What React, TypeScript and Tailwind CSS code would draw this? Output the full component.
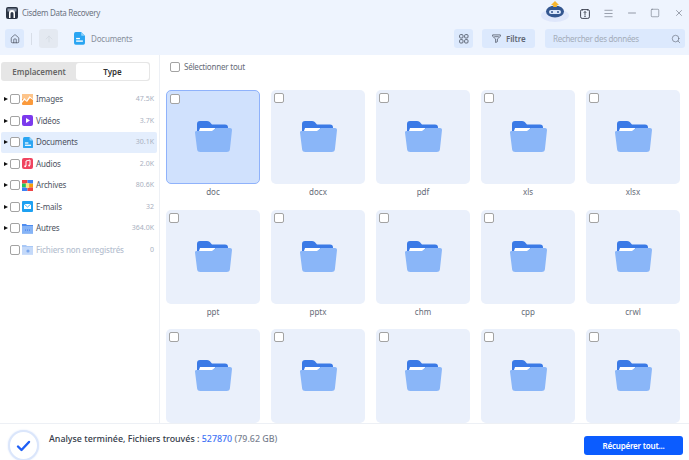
import React from "react";
import { Search, ArrowUp, Minus, Square, X, Menu, House } from "lucide-react";

const Check = ({ className = "" }: { className?: string }) => (
  <span className={"block w-[10px] h-[10px] rounded-[2px] border border-[#a3a3a3] bg-white shrink-0 " + className} />
);

const DocIcon = ({ size = 13 }: { size?: number }) => (
  <svg width={size} height={size * 1.15} viewBox="0 0 13 15" className="shrink-0">
    <path d="M2 0h6.5L13 4.5V13a2 2 0 0 1-2 2H2a2 2 0 0 1-2-2V2a2 2 0 0 1 2-2z" fill="#2aa5f2" />
    <path d="M8.5 0L13 4.5H9.5a1 1 0 0 1-1-1z" fill="#8fd2fa" />
    <rect x="2.5" y="7" width="4.5" height="1.6" fill="#fff" />
    <rect x="2.5" y="10" width="8" height="1.6" fill="#fff" />
  </svg>
);

const icons: Record<string, React.ReactNode> = {
  Images: (
    <svg width="11" height="11" viewBox="0 0 11 11">
      <rect width="11" height="11" rx="1" fill="#fb9a3c" />
      <path d="M5 6l2.500-4 3.500 3V0H0v5z" fill="#fdc48a" />
      <path d="M0 7l2.500-3 2 2.500L7.500 2 11 5v1L8 4 5 8 2.500 6 0 9z" fill="#fff" />
    </svg>
  ),
  Vidéos: (
    <svg width="11" height="11" viewBox="0 0 11 11">
      <rect width="11" height="11" rx="2" fill="#7c3aed" />
      <path d="M4 3l4 2.500L4 8z" fill="#fff" />
    </svg>
  ),
  Documents: <DocIcon size={10} />,
  Audios: (
    <svg width="11" height="11" viewBox="0 0 11 11">
      <rect width="11" height="11" rx="2" fill="#f0435f" />
      <path d="M4 8V3l4-1v5" stroke="#fff" fill="none" />
      <circle cx="3.200" cy="8.200" r="1" fill="#fff" />
      <circle cx="7.200" cy="7.400" r="1" fill="#fff" />
    </svg>
  ),
  Archives: (
    <svg width="11" height="11" viewBox="0 0 11 11">
      <rect width="5.500" height="3.600" fill="#ef4444" />
      <rect x="5.500" width="5.500" height="3.600" fill="#3b82f6" />
      <rect y="3.600" width="5.500" height="3.800" fill="#22c55e" />
      <rect x="5.500" y="3.600" width="5.500" height="3.800" fill="#f59e0b" />
      <rect y="7.400" width="5.500" height="3.600" fill="#3b82f6" />
      <rect x="5.500" y="7.400" width="5.500" height="3.600" fill="#ef4444" />
      <rect x="3.800" y="3" width="3.400" height="5" rx=".5" fill="#fde68a" />
    </svg>
  ),
  "E-mails": (
    <svg width="11" height="11" viewBox="0 0 11 11">
      <rect width="11" height="11" rx="1" fill="#1ea1f2" />
      <rect x="2" y="3" width="7" height="5" fill="#fff" />
      <path d="M2 3l3.500 3L9 3" stroke="#1ea1f2" strokeWidth=".8" fill="none" />
    </svg>
  ),
  Autres: (
    <svg width="11" height="11" viewBox="0 0 11 11">
      <path d="M0 1h4l1 1h6v8.500H0z" fill="#4f8df0" />
      <rect y="3" width="11" height="7.500" fill="#86b4f6" />
      <circle cx="3.500" cy="7" r=".5" fill="#2563eb" />
      <circle cx="5.500" cy="7" r=".5" fill="#2563eb" />
      <circle cx="7.500" cy="7" r=".5" fill="#2563eb" />
    </svg>
  ),
  "Fichiers non enregistrés": (
    <svg width="11" height="11" viewBox="0 0 11 11">
      <path d="M0 1h4l1 1h6v8.500H0z" fill="#a9c8f6" />
      <rect y="3" width="11" height="7.500" fill="#c4d9f9" />
      <circle cx="6" cy="7" r="1.600" fill="#7ba8ee" />
    </svg>
  ),
};

const rows = [
  ["Images", "47.5K"],
  ["Vidéos", "3.7K"],
  ["Documents", "30.1K"],
  ["Audios", "2.0K"],
  ["Archives", "80.6K"],
  ["E-mails", "32"],
  ["Autres", "364.0K"],
  ["Fichiers non enregistrés", "0"],
];

const Folder = () => (
  <svg width="37" height="31" viewBox="0 0 37 31" className="mt-[-1px]">
    <path d="M2 3a3 3 0 0 1 3-3h7c2 0 3 1 4 2.500l1 1h13a3 3 0 0 1 3 3v8H2z" fill="#3b7ae6" />
    <path d="M5 7h15.500l-2 3H4z" fill="#fff" />
    <path d="M1.500 10h14.500c1.500 0 2-.6 3-1.500.8-.8 1.500-1.500 3-1.500H35c1.300 0 2 .8 2 2L35 27.500a3.500 3.500 0 0 1-3.500 3.500H5.500A3.500 3.500 0 0 1 2 27.500L0 11.500c0-1 .5-1.500 1.500-1.500z" fill="#8ab6f8" />
  </svg>
);

const names = ["doc", "docx", "pdf", "xls", "xlsx", "ppt", "pptx", "chm", "cpp", "crwl", "", "", "", "", ""];

export default function App() {
  return (
    <div className="w-[689px] h-[460px] overflow-hidden bg-white flex flex-col font-['Noto_Sans','Liberation_Sans',sans-serif] text-[#555]">
      <header className="h-[55px] shrink-0 bg-[#eef4fe] flex flex-col">
        <div className="h-[26px] flex items-center pl-[6px] pr-[5px]">
          <svg width="12" height="12" viewBox="0 0 12 12" className="shrink-0">
            <rect width="12" height="12" rx="2" fill="#2b3444" />
            <rect x="1.500" y="1.500" width="9" height="3" fill="#8a94a6" />
            <path d="M3 11V6a3 3 0 0 1 6 0v5H7.500V6.500a1.500 1.500 0 0 0-3 0V11z" fill="#fff" />
          </svg>
          <span className="ml-[4px] text-[8px] tracking-[-0.28px] text-[#6b7280]">Cisdem Data Recovery</span>
          <div className="ml-auto flex items-center">
            <svg width="28" height="21" viewBox="0 0 28 21" className="mr-[11px] mt-[-3px]">
              <ellipse cx="14" cy="14.500" rx="14" ry="6.500" fill="#dfe7fb" />
              <ellipse cx="14" cy="10.500" rx="9" ry="6" fill="#33568f" />
              <rect x="8" y="9" width="12" height="4" rx="2" fill="#dbe7fb" />
              <circle cx="11" cy="11" r="1" fill="#33568f" />
              <circle cx="17" cy="11" r="1" fill="#33568f" />
              <path d="M14 0l4 4h-2.200v2h-3.600V4H10z" fill="#f8b62c" />
            </svg>
            <svg width="10" height="11" viewBox="0 0 10 11" className="mr-[13px]">
              <rect x=".6" y="1.600" width="8.800" height="8.800" rx="1.600" fill="none" stroke="#404654" strokeWidth="1" />
              <path d="M2.500 1V2.500M7.500 1V2.500" stroke="#404654" />
              <path d="M5 3.500v3.500M3.800 4.800L5 3.500l1.200 1.300M4 8.200h2" stroke="#404654" fill="none" strokeWidth=".9" />
            </svg>
            <Menu size={11} strokeWidth={1.2} className="text-[#555c6b] mr-[12px]" />
            <Minus size={12} strokeWidth={1.2} className="text-[#555c6b] mr-[12px]" />
            <Square size={10} strokeWidth={1.2} className="text-[#555c6b] mr-[14px]" />
            <X size={10} strokeWidth={1.3} className="text-[#555c6b]" />
          </div>
        </div>
        <div className="h-[19px] flex items-center pl-[5px] pr-[4px] mt-[3px]">
          <div className="w-[19px] h-[19px] rounded-[3px] bg-[#dce9fd] flex items-center justify-center">
            <House size={10} strokeWidth={1.6} className="text-[#3f4653]" />
          </div>
          <div className="w-px h-[12px] bg-[#d8dee8] ml-[7px]" />
          <div className="ml-[7px] w-[19px] h-[19px] rounded-[3px] bg-[#e4e9f1] flex items-center justify-center">
            <ArrowUp size={10} strokeWidth={1.5} className="text-[#cfd5de]" />
          </div>
          <span className="ml-[16px]"><DocIcon size={11} /></span>
          <span className="ml-[6px] text-[8px] tracking-[-0.2px] text-[#888f9b]">Documents</span>
          <div className="ml-auto w-[19px] h-[19px] rounded-[3px] bg-[#dce9fd] flex items-center justify-center">
            <svg width="10" height="10" viewBox="0 0 10 10" fill="none" stroke="#555c6b" strokeWidth=".9">
              <rect x=".6" y=".6" width="3.400" height="3.400" rx="1" />
              <rect x="5.600" y=".6" width="3.400" height="3.400" rx="1" />
              <rect x=".6" y="5.600" width="3.400" height="3.400" rx="1" />
              <rect x="5.600" y="5.600" width="3.400" height="3.400" rx="1" />
            </svg>
          </div>
          <div className="ml-[9px] w-[53px] h-[19px] rounded-[3px] bg-[#dce9fd] flex items-center pl-[10px]">
            <svg width="9" height="9" viewBox="0 0 10 10" fill="none" stroke="#555c6b" strokeWidth=".9">
              <path d="M.7 1h8.600v1.600L6 5.500v3L4 9.500v-4L.7 2.600z" />
              <path d="M2.500 3h5" />
            </svg>
            <span className="ml-[5px] text-[8px] tracking-[-0.1px] font-semibold text-[#606774]">Filtre</span>
          </div>
          <div className="ml-[10px] w-[140px] h-[19px] rounded-[3px] bg-[#dce9fd] flex items-center pl-[8px] pr-[4px]">
            <span className="text-[8px] tracking-[-0.3px] text-[#a4adba]">Rechercher des données</span>
            <Search size={10} strokeWidth={1.4} className="ml-auto text-[#5b6270]" />
          </div>
        </div>
      </header>

      <div className="flex-1 min-h-0 flex">
        <aside className="w-[160px] shrink-0 border-r border-[#edf0f5] pt-[7px] pl-px pr-[2px]">
          <div className="w-[149px] h-[19px] rounded-[3px] bg-[#e6e6e6] flex p-px text-[8px] font-semibold">
            <span className="w-[74px] flex items-center justify-center text-[#666]">Emplacement</span>
            <span className="flex-1 rounded-[3px] bg-white flex items-center justify-center text-[#333]">Type</span>
          </div>
          <ul className="mt-[8px] flex flex-col gap-px">
            {rows.map(([name, count], i) => {
              const selected = name === "Documents";
              const last = i === rows.length - 1;
              return (
                <li
                  key={name}
                  className={"h-[20.500px] flex items-center rounded-[2px] pr-[3px] " + (selected ? "bg-[#e4eefd]" : "")}
                >
                  <span className="w-[9px] flex justify-center shrink-0">
                    {!last && <span className="block w-0 h-0 border-y-[2.500px] border-y-transparent border-l-[4px] border-l-[#111]" />}
                  </span>
                  <Check />
                  <span className="ml-[2px] w-[11px] flex justify-center shrink-0">{icons[name]}</span>
                  <span className={"ml-[3px] text-[8px] tracking-[-0.16px] whitespace-nowrap " + (last ? "text-[#b6bfd0] font-medium" : "text-[#4d5362]")}>{name}</span>
                  <span className="ml-auto text-[7px] text-[#a9b0c0]">{count}</span>
                </li>
              );
            })}
          </ul>
        </aside>

        <main className="flex-1 min-w-0 overflow-hidden">
          <div className="h-[35px] flex items-start pl-[10px] pt-[7px]">
            <Check />
            <span className="ml-[4px] text-[8px] tracking-[-0.2px] leading-[10px] text-[#666c78]">Sélectionner tout</span>
          </div>
          <div className="grid grid-cols-[94px_94px_94px_94px_94px] gap-x-[11px] gap-y-[6px] pl-[6px]">
            {names.map((n, i) => (
              <div key={i} className="flex flex-col items-center h-[113.500px]">
                <div
                  className={
                    "relative w-[94px] h-[94px] shrink-0 rounded-[5px] flex items-center justify-center " +
                    (i === 0 ? "bg-[#d0e1fd] border border-[#8fb2fb]" : "bg-[#eaf0fb]")
                  }
                >
                  <Check className={"absolute left-[3px] top-[3px] " + (i === 0 ? "border-[#8fb2fb]" : "")} />
                  <Folder />
                </div>
                <span className="mt-[2px] text-[8px] leading-[12px] text-[#666c78]">{n}</span>
              </div>
            ))}
          </div>
        </main>
      </div>

      <footer className="h-[37px] shrink-0 bg-white border-t border-[#edf0f5] flex items-center pl-[8px] pr-[6px]">
        <div className="mt-[7px] w-[31px] h-[31px] rounded-full bg-white border-[2.500px] border-[#dbe6fb] flex items-center justify-center shadow-[0_0_2px_#dbe6fb]">
          <svg width="15" height="12" viewBox="0 0 15 12" fill="none" stroke="#1f5ff5" strokeWidth="2.400" strokeLinecap="round" strokeLinejoin="round">
            <path d="M2 6.500l3.500 3.500L13 2" />
          </svg>
        </div>
        <span className="ml-[10px] mb-[6px] text-[8.900px] font-medium text-[#333a48] whitespace-nowrap">
          Analyse terminée, Fichiers trouvés : <span className="text-[#3f73f5]">527870</span> <span className="text-[#7a8290]">(79.62 GB)</span>
        </span>
        <button className="ml-auto mt-[7px] w-[99px] h-[19px] rounded-[3px] bg-[#0b5cff] text-white text-[8px] tracking-[-0.2px] font-semibold">
          Récupérer tout...
        </button>
      </footer>
    </div>
  );
}
